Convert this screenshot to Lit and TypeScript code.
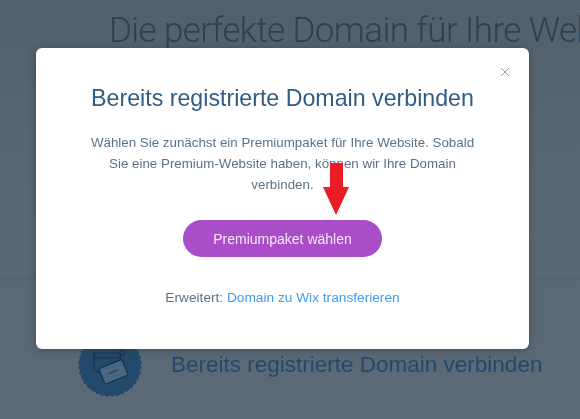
import { LitElement, html, css } from "lit";
import { customElement } from "lit/decorators.js";

@customElement("app-root")
export class AppRoot extends LitElement {
  static styles = css`
    :host {
      display: block;
      position: relative;
      width: 580px;
      height: 419px;
      overflow: hidden;
      background: linear-gradient(#51606b, #596873 45%, #5a6975);
      font-family: "Liberation Sans", Arial, sans-serif;
    }
    .page {
      height: 419px;
      box-sizing: border-box;
      padding: 9px 0 0 109px;
      display: flex;
      flex-direction: column;
      filter: blur(0.5px);
    }
    .hero {
      margin: 0;
      font-family: Roboto, "Liberation Sans", sans-serif;
      font-weight: 300;
      font-size: 35px;
      letter-spacing: -0.6px;
      line-height: 44px;
      color: #2b4256;
      white-space: nowrap;
    }
    .rule {
      margin: 225px 0 0 -109px;
      width: 580px;
      height: 1px;
      background: #546370;
    }
    .option {
      margin: 54px 0 0 -31px;
      display: flex;
      align-items: center;
      gap: 29px;
    }
    .seal {
      width: 64px;
      height: 64px;
      flex: none;
    }
    .option-title {
      font-size: 22.5px;
      line-height: 28px;
      color: #234a6e;
      white-space: nowrap;
    }
    .modal {
      position: absolute;
      left: 36px;
      top: 48px;
      width: 493px;
      height: 301px;
      box-sizing: border-box;
      padding: 36px 0 0;
      background: #fff;
      border-radius: 6px;
      box-shadow: 0 1px 7px rgba(40, 52, 62, 0.5);
      display: flex;
      flex-direction: column;
      align-items: center;
      filter: blur(0.4px);
    }
    .close {
      position: absolute;
      left: 464px;
      top: 19px;
      width: 10px;
      height: 10px;
    }
    h2 {
      margin: 0;
      font-weight: 400;
      font-size: 23.2px;
      line-height: 28px;
      color: #2f5d85;
      white-space: nowrap;
    }
    p {
      margin: 20px 0 0;
      width: 400px;
      text-align: center;
      font-size: 13.35px;
      line-height: 21px;
      color: #5b7288;
    }
    .cta {
      margin-top: 25px;
      width: 199px;
      height: 37px;
      border: 0;
      border-radius: 19px;
      background: #aa4dc8;
      color: #f6e9fb;
      font: 14px "Liberation Sans", Arial, sans-serif;
    }
    .foot {
      margin-top: 33px;
      font-size: 13.7px;
      line-height: 16px;
      color: #5b7288;
    }
    .foot a {
      color: #3f9bf3;
      text-decoration: none;
    }
    .arrow {
      position: absolute;
      left: 323px;
      top: 163px;
      width: 26px;
      height: 52px;
    }
  `;

  private teeth() {
    const n = 36, pts: string[] = [];
    for (let i = 0; i < n * 2; i++) {
      const r = i % 2 ? 32 : 30.6, a = (i * Math.PI) / n;
      pts.push(`${(32 + r * Math.cos(a)).toFixed(2)},${(32 + r * Math.sin(a)).toFixed(2)}`);
    }
    return pts.join(" ");
  }

  render() {
    return html`
      <div class="page">
        <h1 class="hero">Die perfekte Domain für Ihre Website</h1>
        <div class="rule"></div>
        <div class="option">
          <svg class="seal" viewBox="0 0 64 64">
            <polygon points=${this.teeth()} fill="#234a6c"></polygon>
            <g fill="none" stroke="#1d3346" stroke-width="1.2">
              <rect x="16" y="20" width="27" height="19" rx="1.5"></rect>
              <path d="M16 25h27"></path>
              <circle cx="44" cy="20" r="2.5"></circle>
            </g>
            <g transform="rotate(-22 35 39)">
              <rect x="23" y="30.5" width="25" height="17" rx="1.5" fill="#4a6680" stroke="#1d3346" stroke-width="1.3"></rect>
              <path d="M30 39h10" stroke="#1d3346" stroke-width="1.6" stroke-dasharray="1 .6"></path>
            </g>
          </svg>
          <div class="option-title">Bereits registrierte Domain verbinden</div>
        </div>
      </div>
      <div class="modal">
        <svg class="close" viewBox="0 0 10 10" fill="none" stroke="#8ba3b8" stroke-width="1">
          <path d="M1 1l8 8M9 1l-8 8"></path>
        </svg>
        <h2>Bereits registrierte Domain verbinden</h2>
        <p>Wählen Sie zunächst ein Premiumpaket für Ihre Website. Sobald Sie eine Premium-Website haben, können wir Ihre Domain verbinden.</p>
        <button class="cta">Premiumpaket wählen</button>
        <div class="foot">Erweitert: <a href="#">Domain zu Wix transferieren</a></div>
      </div>
      <svg class="arrow" viewBox="0 0 26 52">
        <path d="M7 0h13v24h6L13 52 0 24h7z" fill="#ec1c24"></path>
      </svg>
    `;
  }
}
